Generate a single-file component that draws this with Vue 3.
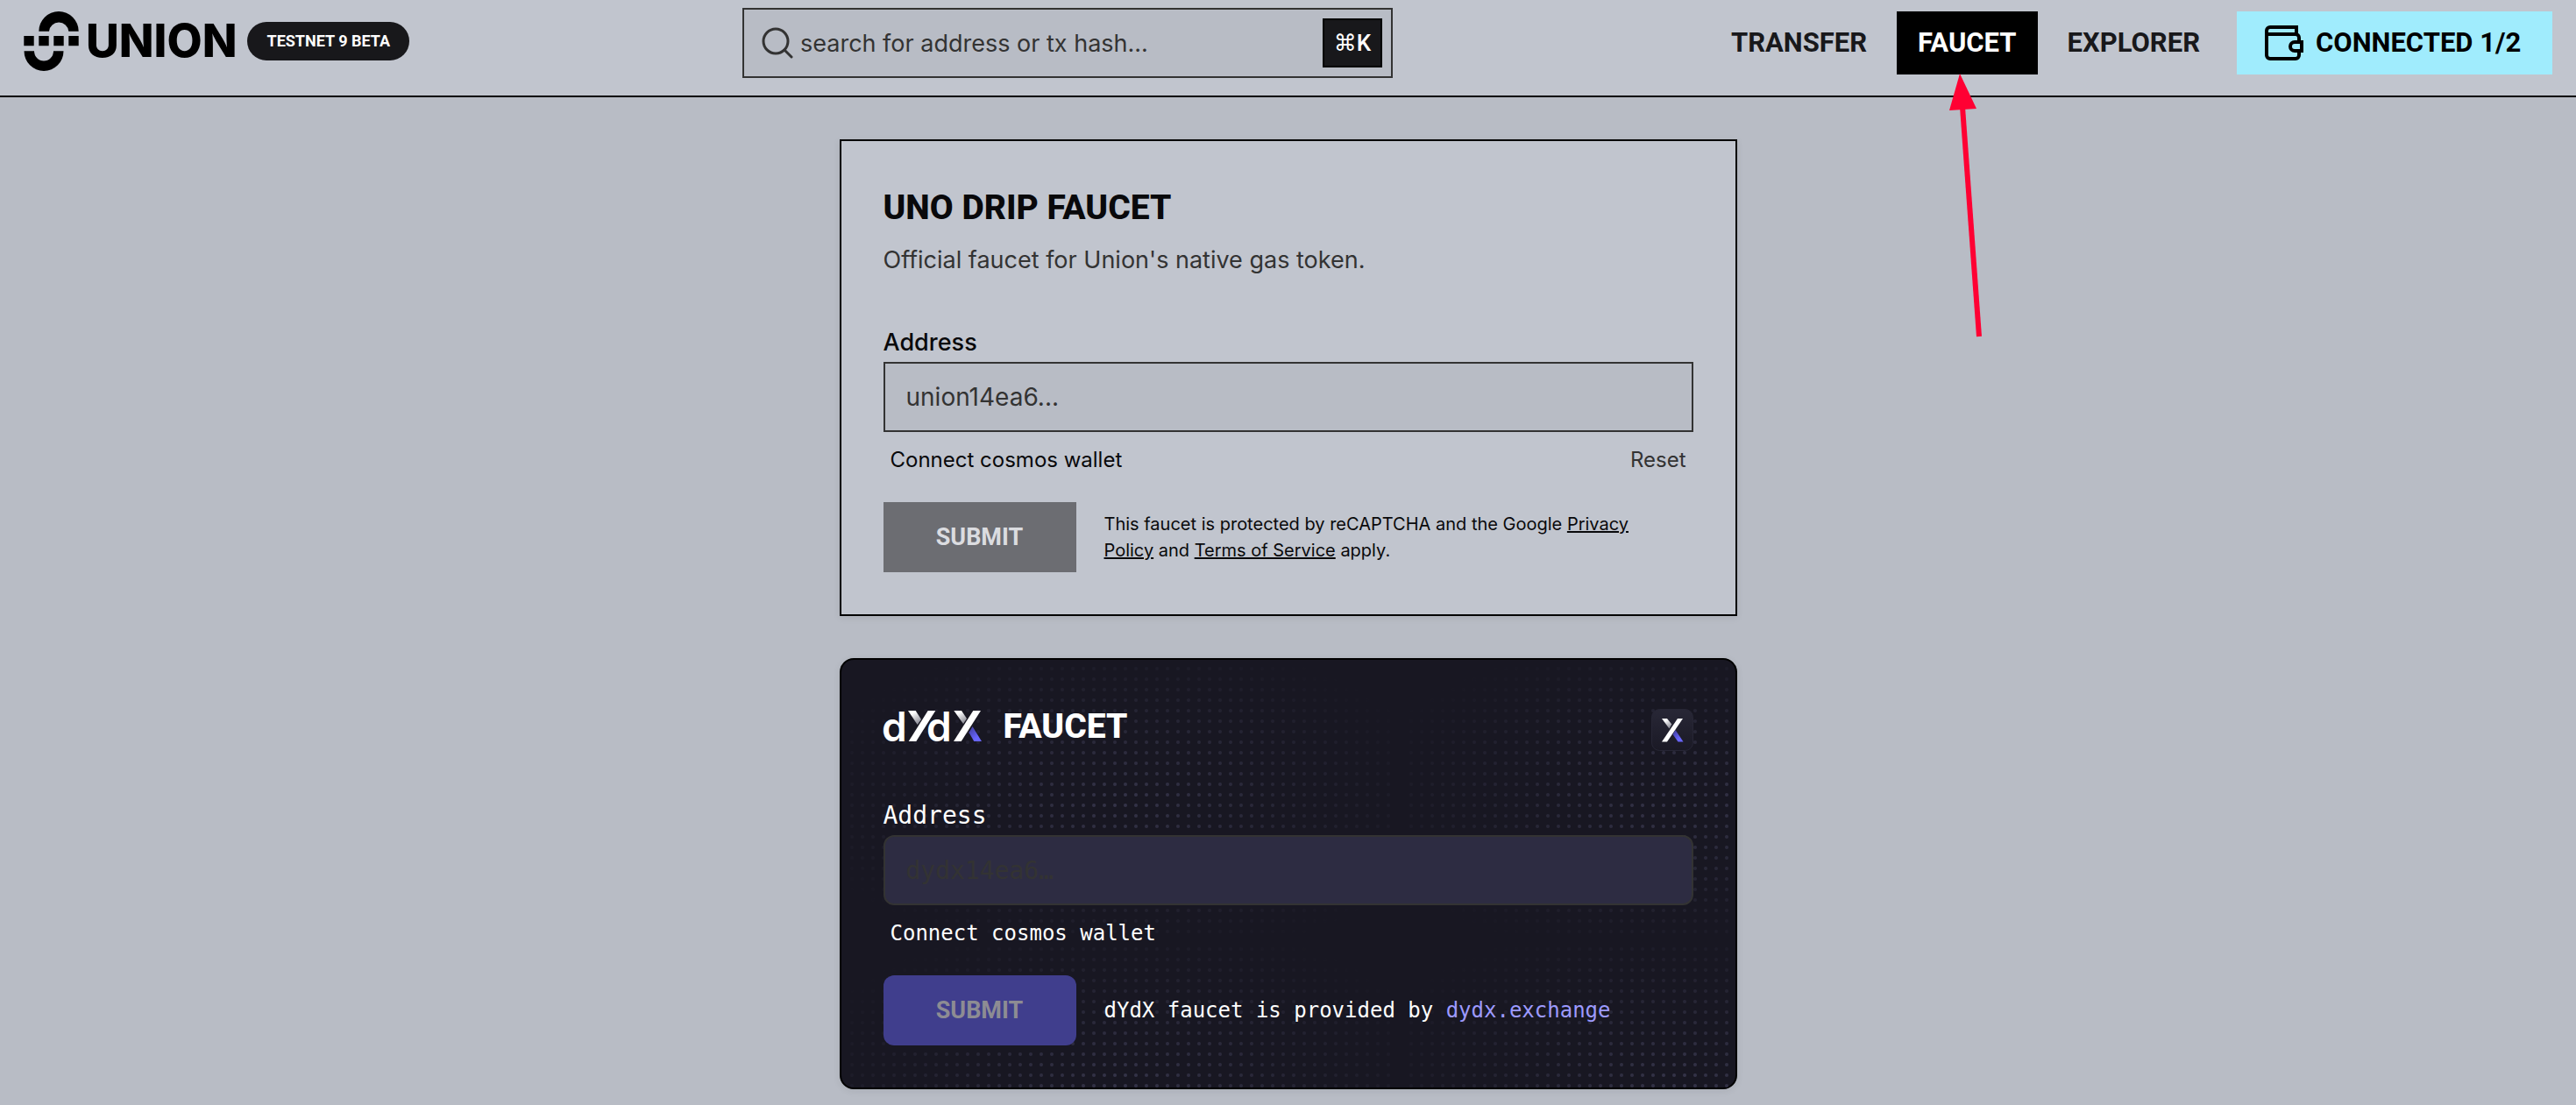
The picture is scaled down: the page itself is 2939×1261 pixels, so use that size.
<script setup>
import { ref } from 'vue'

const query = ref('')
const unionAddress = ref('')
const dydxAddress = ref('')
</script>

<template>
  <div class="page">
    <header class="topbar">
      <a class="brand" href="#">
        <svg class="brand-mark" viewBox="0 0 63 68" aria-hidden="true">
          <path d="M17.3 22.7A22.7 22.7 0 0 1 62.7 22.7H51.3A11.2 11.2 0 0 0 29 22.7Z" />
          <path d="M.5 45.3A22.5 22.7 0 0 0 45.5 45.3H34A11 11.2 0 0 1 12 45.3Z" />
          <path d="M.3 28h11.4v11.3H.3zM17.3 28h11.4v11.3H17.3zM34.3 28h11.4v11.3H34.3zM51.3 28h11.4v11.3H51.3z" />
        </svg>
        <span class="brand-name">UNION</span>
        <span class="badge">TESTNET 9 BETA</span>
      </a>

      <label class="search">
        <svg class="search-icon" viewBox="0 0 36 36" aria-hidden="true">
          <circle cx="16" cy="16" r="14" />
          <path d="M26 26l8 8" />
        </svg>
        <input v-model="query" type="text" aria-label="Search" placeholder="search for address or tx hash..." />
        <kbd>⌘K</kbd>
      </label>

      <nav class="nav">
        <a class="nav-link" href="#transfer">TRANSFER</a>
        <a class="nav-link active" href="#faucet">
          FAUCET
          <svg class="pointer" viewBox="0 0 40 304" aria-hidden="true">
            <path d="M15 38L34 300" stroke="#ff0033" stroke-width="6" />
            <path d="M12 0L0 42L31 40Z" fill="#ff0033" />
          </svg>
        </a>
        <a class="nav-link" href="#explorer">EXPLORER</a>
        <button class="wallet" type="button">
          <svg viewBox="0 0 44 41" aria-hidden="true">
            <path d="M36 10V2H6a4 4 0 0 0-4 4v28a4 4 0 0 0 4 4h29a4 4 0 0 0 4-4v-5M2 10h33a4 4 0 0 1 4 4v4" />
            <path d="M42 19h-8a5 5 0 0 0 0 10h8z" />
          </svg>
          CONNECTED 1/2
        </button>
      </nav>
    </header>

    <main class="content">
      <section class="card uno">
        <h1 class="title">UNO DRIP FAUCET</h1>
        <p class="subtitle">Official faucet for Union's native gas token.</p>
        <form @submit.prevent>
          <label class="label" for="union-address">Address</label>
          <input id="union-address" v-model="unionAddress" class="field" type="text" placeholder="union14ea6..." />
          <div class="helpers">
            <button type="button">Connect cosmos wallet</button>
            <button class="muted" type="button">Reset</button>
          </div>
          <div class="actions">
            <button class="submit" type="submit" disabled>SUBMIT</button>
            <p class="legal">
              This faucet is protected by reCAPTCHA and the Google <a href="#privacy">Privacy Policy</a> and
              <a href="#terms">Terms of Service</a> apply.
            </p>
          </div>
        </form>
      </section>

      <section class="card dydx">
        <svg class="dots" aria-hidden="true">
          <defs>
            <pattern id="dot" width="12" height="12" patternUnits="userSpaceOnUse">
              <circle cx="6" cy="6" r="2" fill="#353449" />
            </pattern>
            <radialGradient id="glow">
              <stop offset="0" stop-color="#fff" />
              <stop offset="1" stop-color="#000" />
            </radialGradient>
            <mask id="fade" maskUnits="userSpaceOnUse" x="0" y="0" width="638" height="320">
              <ellipse cx="319" cy="160" rx="372" ry="186" fill="url(#glow)" />
            </mask>
            <pattern id="tile" width="638" height="320" patternUnits="userSpaceOnUse">
              <g mask="url(#fade)">
                <g transform="translate(6 4)">
                  <rect width="624" height="312" fill="url(#dot)" />
                </g>
              </g>
            </pattern>
          </defs>
          <rect width="100%" height="100%" fill="url(#tile)" />
        </svg>

        <div class="heading">
          <h2 class="title">
            <svg class="dydx-logo" viewBox="0 0 112 36" role="img" aria-label="dYdX">
              <defs>
                <linearGradient id="shade" x1="0" y1="0" x2=".6" y2="1">
                  <stop offset=".3" stop-color="#fff" />
                  <stop offset="1" stop-color="#8e8e98" />
                </linearGradient>
                <linearGradient id="violet" x1="0" y1="0" x2=".7" y2="1">
                  <stop offset="0" stop-color="#3d3b95" />
                  <stop offset=".8" stop-color="#6966ff" />
                </linearGradient>
              </defs>
              <text x="-2" y="35">d</text>
              <text x="49" y="35">d</text>
              <path d="M28 0h8.700l6.300 10-4.300 6z" fill="url(#shade)" />
              <path d="M50.700 0h8.600l-22 35h-8.600z" fill="#fff" />
              <path d="M80.300 0H89l6 9-4 6z" fill="url(#shade)" />
              <path d="M102.300 0h8.700l-22.300 35H80z" fill="#fff" />
              <path d="M101.500 18l-4 7 5.800 10h8.700z" fill="url(#violet)" />
            </svg>
            FAUCET
          </h2>
          <svg class="chip" viewBox="0 0 48 48" aria-hidden="true">
            <defs>
              <linearGradient id="chip-fill" x1="0" y1="0" x2="0" y2="1">
                <stop offset="0" stop-color="#282736" />
                <stop offset="1" stop-color="#1a1925" />
              </linearGradient>
            </defs>
            <rect x=".5" y=".5" width="47" height="47" rx="9" fill="url(#chip-fill)" stroke="#272635" />
            <path d="M12 11h6l5.300 6.500-2.800 5z" fill="url(#shade)" />
            <path d="M30 11h6L18 37.500h-6z" fill="#fff" />
            <path d="M27.500 24l-3 5 6 8.500h6z" fill="url(#violet)" />
          </svg>
        </div>
        <form @submit.prevent>
          <label class="label" for="dydx-address">Address</label>
          <input id="dydx-address" v-model="dydxAddress" class="field" type="text" placeholder="dydx14ea6…" />
          <div class="helpers">
            <button type="button">Connect cosmos wallet</button>
          </div>
          <div class="actions">
            <button class="submit" type="submit" disabled>SUBMIT</button>
            <p class="provider">dYdX faucet is provided by <a href="#dydx">dydx.exchange</a></p>
          </div>
        </form>
      </section>
    </main>
  </div>
</template>

<style>
body {
  margin: 0;
  background: #b8bcc5;
}
</style>

<style scoped>
.page {
  --display: Roboto, "Liberation Sans", sans-serif;
  --mono: "DejaVu Sans Mono", "Liberation Mono", monospace;
  min-height: 100vh;
  overflow: hidden;
  box-sizing: border-box;
  padding-bottom: 16px;
  background: #b8bcc5;
  color: #09090b;
  font-family: Inter, "Liberation Sans", sans-serif;
}
.page * {
  box-sizing: border-box;
}
button,
input {
  font: inherit;
  color: inherit;
}
button {
  border: 0;
  padding: 0;
  background: none;
}
h1,
h2,
p {
  margin: 0;
}

.topbar {
  display: flex;
  align-items: flex-start;
  justify-content: space-between;
  padding: 9px 27px 20px;
  background: #c1c5ce;
  border-bottom: 2px solid #000;
}
.brand {
  display: flex;
  align-items: center;
  margin-top: 4px;
  color: #000;
  text-decoration: none;
}
.brand-mark {
  width: 63px;
  height: 68px;
}
.brand-name {
  margin: 0 12px 0 8px;
  font-size: 52px;
  line-height: 56px;
  font-weight: 800;
}
.badge {
  padding: 0 22px;
  border-radius: 22px;
  background: #18181b;
  color: #fff;
  font: 700 18px/44px var(--display);
}
.search {
  display: flex;
  align-items: center;
  gap: 8px;
  width: 742px;
  height: 80px;
  margin-left: 18px;
  padding: 0 10px 0 20px;
  border: 2px solid #333;
  background: #b8bcc5;
  color: #333;
}
.search-icon {
  width: 36px;
  height: 36px;
  fill: none;
  stroke: #333;
  stroke-width: 3;
  stroke-linecap: round;
}
.search input {
  flex: 1;
  min-width: 0;
  padding: 0;
  border: 0;
  outline: 0;
  background: none;
  font-size: 27px;
}
input::placeholder {
  color: #333;
  opacity: 1;
}
kbd {
  width: 68px;
  height: 56px;
  border: 2px solid #000;
  background: #18181b;
  color: #fff;
  font: 500 26px/52px Roboto, "DejaVu Sans", sans-serif;
  text-align: center;
}
.nav {
  display: flex;
  gap: 10px;
  margin-top: 4px;
}
.nav-link {
  position: relative;
  padding: 0 24px;
  color: #18181b;
  font: 700 31px/72px var(--display);
  text-decoration: none;
}
.nav-link.active {
  background: #000;
  color: #fff;
}
.pointer {
  position: absolute;
  z-index: 1;
  top: 71px;
  left: 60px;
  width: 40px;
  height: 304px;
  fill: none;
}
.wallet {
  display: flex;
  align-items: center;
  gap: 14px;
  width: 360px;
  height: 72px;
  margin-left: 8px;
  padding-left: 32px;
  background: #a0ecfd;
  color: #000;
  font: 700 31px/72px var(--display);
  white-space: nowrap;
}
.wallet svg {
  width: 44px;
  height: 41px;
  fill: none;
  stroke: #000;
  stroke-width: 4;
}

.content {
  display: flex;
  flex-direction: column;
  align-items: center;
  gap: 48px;
  padding-top: 48px;
}
.card {
  position: relative;
  width: 100%;
  max-width: 1024px;
  padding: 48px;
  border: 2px solid #000;
  background: #c1c5ce;
  box-shadow: 0 2px 8px rgba(0, 0, 0, 0.08);
}
.title {
  display: flex;
  align-items: center;
  gap: 25px;
  font: 800 39px/56px var(--display);
}
.subtitle {
  margin-top: 12px;
  color: #333;
  font-size: 27px;
  line-height: 40px;
}
form {
  margin-top: 52px;
}
.label {
  display: block;
  font-size: 27px;
  line-height: 44px;
  font-weight: 500;
}
.field {
  display: block;
  width: 100%;
  height: 80px;
  padding: 0 24px;
  border: 2px solid #333;
  outline: 0;
  background: #b8bcc5;
  font-size: 28px;
}
.helpers {
  display: flex;
  justify-content: space-between;
  margin-top: 16px;
  padding: 0 8px;
  font-size: 24px;
  line-height: 32px;
}
.muted {
  color: #333;
}
.actions {
  display: flex;
  align-items: center;
  gap: 32px;
  margin-top: 32px;
}
.submit {
  flex: none;
  width: 220px;
  height: 80px;
  background: #6c6d72;
  color: #dbdce0;
  font: 700 27px/80px var(--display);
}
.legal {
  max-width: 640px;
  font-size: 20px;
  line-height: 30px;
}
.legal a {
  color: inherit;
}

.dydx {
  border-radius: 16px;
  background: #181722;
  color: #fff;
  font-family: var(--mono);
}
.dots {
  position: absolute;
  inset: 0;
  width: 100%;
  height: 100%;
}
.heading,
.dydx form {
  position: relative;
}
.heading {
  display: flex;
  align-items: flex-end;
  justify-content: space-between;
}
.dydx-logo {
  width: 112px;
  height: 36px;
  overflow: visible;
}
.dydx-logo text {
  fill: #fff;
  font: 600 46px Inter, sans-serif;
}
.chip {
  width: 48px;
  height: 48px;
}
.dydx .label {
  font-size: 28px;
}
.dydx .field {
  border-radius: 12px;
  background: #2d2c42;
}
.dydx .submit {
  border-radius: 12px;
  background: #403e8d;
  color: #8d8c93;
}
.provider {
  font-size: 24px;
  line-height: 32px;
}
.provider a {
  color: #9d9aff;
  text-decoration: none;
}
</style>
